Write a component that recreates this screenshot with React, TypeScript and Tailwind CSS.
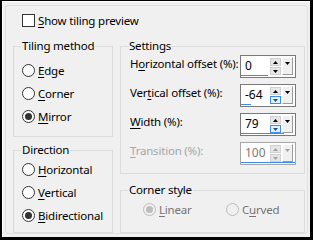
import React from "react";

const Radio = ({ checked, disabled }: { checked?: boolean; disabled?: boolean }) => (
  <span
    className={
      "w-[13px] h-[13px] shrink-0 rounded-full border flex items-center justify-center " +
      (disabled ? "border-[#bcbcbc] bg-[#f0f0f0]" : "border-[#333333] bg-white")
    }
  >
    {checked && (
      <span className={"w-[7px] h-[7px] rounded-full " + (disabled ? "bg-[#bcbcbc]" : "bg-[#333333]")} />
    )}
  </span>
);

const Ul = ({ children }: { children: React.ReactNode }) => (
  <span className="underline underline-offset-[2px] decoration-[1px]">{children}</span>
);

const RadioRow = ({
  checked,
  disabled,
  children,
  w,
}: {
  checked?: boolean;
  disabled?: boolean;
  children: React.ReactNode;
  w?: string;
}) => (
  <div className={"h-[23px] flex items-center gap-[3px] " + (w ?? "")}>
    <Radio checked={checked} disabled={disabled} />
    <span className={"leading-[16px] whitespace-nowrap " + (disabled ? "text-[#747474]" : "text-black")}>
      {children}
    </span>
  </div>
);

const Up = ({ color }: { color: string }) => (
  <svg width="5" height="3" viewBox="0 0 5 3">
    <path d="M2.5 0 L5 3 L0 3 Z" fill={color} />
  </svg>
);
const Down = ({ color }: { color: string }) => (
  <svg width="5" height="3" viewBox="0 0 5 3">
    <path d="M0 0 L5 0 L2.5 3 Z" fill={color} />
  </svg>
);

const SpinBox = ({
  value,
  pct,
  hot,
  disabled,
}: {
  value: string;
  pct: number;
  hot?: boolean;
  disabled?: boolean;
}) => {
  const arrow = disabled ? "#a0a0a0" : "#000000";
  return (
    <div
      className={
        "w-[56px] h-[23px] shrink-0 border bg-white flex flex-col " +
        (disabled ? "border-[#a8a8a8]" : "border-[#7a7a7a]")
      }
    >
      <div className="flex h-[19px] pt-[1px]">
        <div
          className={
            "w-[29px] pl-[4px] leading-[18px] text-[12px] tracking-[0px] " +
            (disabled ? "text-[#7a7a7a]" : "text-black")
          }
        >
          {value}
        </div>
        <div className="w-[11px] flex flex-col gap-[1px] pt-[1px]">
          <div className="h-[8px] bg-[#e6e6e6] border border-[#d0d0d0] flex items-center justify-center">
            <Up color={arrow} />
          </div>
          <div
            className={
              "h-[8px] border flex items-center justify-center " +
              (hot ? "bg-[#e5f1fb] border-[#3c8ee6]" : "bg-[#e6e6e6] border-[#d0d0d0]")
            }
          >
            <Down color={hot ? "#1a4f8a" : arrow} />
          </div>
        </div>
        <div className="ml-[1px] w-[11px] h-[18px] bg-[#f0f0f0] border-t border-l border-white border-r border-b border-r-[#9a9a9a] border-b-[#9a9a9a] flex justify-center pt-[4px]">
          <div className="h-[4px] flex">
            <Down color={arrow} />
          </div>
        </div>
      </div>
      <div className="mt-auto mb-[1px] h-[2px] bg-[#3b8ced]" style={{ width: `${pct * 54}px` }} />
    </div>
  );
};

const Group = ({
  label,
  className,
  children,
}: {
  label: string;
  className: string;
  children: React.ReactNode;
}) => (
  <div className={"relative border border-[#dcdcdc] " + className}>
    <span className="absolute top-[-9px] left-[7px] px-[1px] bg-[#f0f0f0] leading-[16px] text-black whitespace-nowrap">
      {label}
    </span>
    {children}
  </div>
);

const SettingRow = ({
  label,
  children,
  disabled,
}: {
  label: React.ReactNode;
  children: React.ReactNode;
  disabled?: boolean;
}) => (
  <div className="flex items-start">
    <div
      className={
        "w-[110px] mt-[1px] leading-[16px] whitespace-nowrap " + (disabled ? "text-[#a6a6a6]" : "text-black")
      }
    >
      {label}
    </div>
    {children}
  </div>
);

export default function App() {
  return (
    <div className="w-[313px] h-[240px] bg-black pt-[1px] pl-[2px] pr-[3px] pb-[3px] font-['Noto_Sans',sans-serif] text-[11.5px] tracking-[-0.2px]">
      <div className="w-full h-full bg-[#f0f0f0] border-t border-l border-white flex flex-col">
        <div className="mt-[3px] ml-[2px] mr-[2px] h-[229px] border border-[#e0e0e0] rounded-[3px] flex flex-col">
          <div className="h-[40px] pl-[16px] pt-[8px] flex items-start gap-[3px]">
            <span className="w-[13px] h-[13px] border border-[#333333] bg-white" />
            <span className="leading-[13px] text-black whitespace-nowrap">
              <Ul>S</Ul>how tiling preview
            </span>
          </div>
          <div className="flex pl-[7px] pr-[2px] gap-[7px]">
            <div className="w-[100px] flex flex-col gap-[13px]">
              <Group label="Tiling method" className="h-[91px] pt-[12px] pl-[8px]">
                <RadioRow>
                  <Ul>E</Ul>dge
                </RadioRow>
                <RadioRow>
                  <Ul>C</Ul>orner
                </RadioRow>
                <RadioRow checked>
                  <Ul>M</Ul>irror
                </RadioRow>
              </Group>
              <Group label="Direction" className="h-[83px] pt-[7px] pl-[8px]">
                <RadioRow>
                  <Ul>H</Ul>orizontal
                </RadioRow>
                <RadioRow>
                  <Ul>V</Ul>ertical
                </RadioRow>
                <RadioRow checked>
                  <Ul>B</Ul>idirectional
                </RadioRow>
              </Group>
            </div>
            <div className="w-[185px] flex flex-col gap-[16px]">
              <Group label="Settings" className="h-[128px] pt-[8px] pl-[9px] flex flex-col gap-[6px]">
                <SettingRow
                  label={
                    <>
                      H<Ul>o</Ul>rizontal offset (%):
                    </>
                  }
                >
                  <SpinBox value="0" pct={0.5} />
                </SettingRow>
                <SettingRow
                  label={
                    <>
                      Ver<Ul>t</Ul>ical offset (%):
                    </>
                  }
                >
                  <SpinBox value="-64" pct={0.18} hot />
                </SettingRow>
                <SettingRow
                  label={
                    <>
                      <Ul>W</Ul>idth (%):
                    </>
                  }
                >
                  <SpinBox value="79" pct={0.79} hot />
                </SettingRow>
                <SettingRow
                  disabled
                  label={
                    <>
                      <Ul>T</Ul>ransition (%):
                    </>
                  }
                >
                  <SpinBox value="100" pct={1} disabled />
                </SettingRow>
              </Group>
              <Group label="Corner style" className="h-[43px] pt-[7px] pl-[22px] flex">
                <RadioRow checked disabled w="w-[83px]">
                  <Ul>L</Ul>inear
                </RadioRow>
                <RadioRow disabled>
                  C<Ul>u</Ul>rved
                </RadioRow>
              </Group>
            </div>
          </div>
        </div>
      </div>
    </div>
  );
}
